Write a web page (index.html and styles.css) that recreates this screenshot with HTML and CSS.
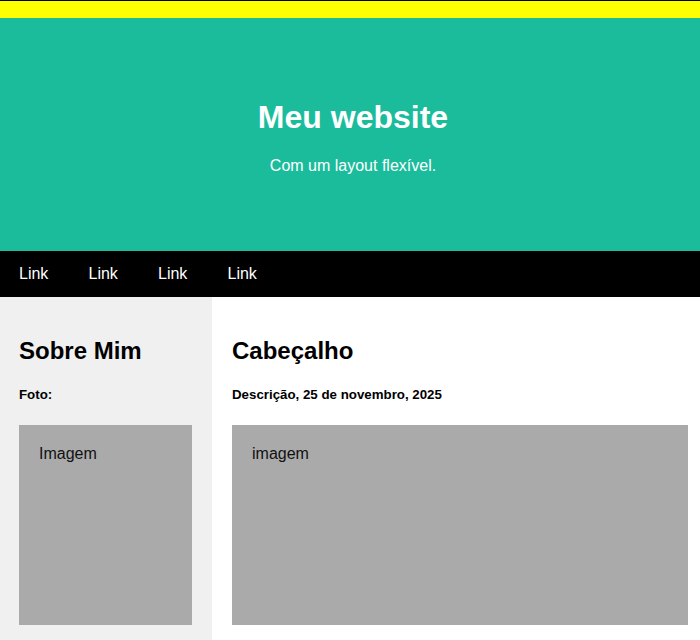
FILE: index.html
```html
<!DOCTYPE html>
<html lang="pt">
<head>
<meta charset="utf-8">
<title>Meu website</title>
<link rel="stylesheet" href="styles.css">
</head>
<body>
<div class="topbar"></div>
<header class="header">
  <h1>Meu website</h1>
  <p>Com um layout flexível.</p>
</header>
<nav class="navbar">
  <a href="#">Link</a>
  <a href="#">Link</a>
  <a href="#">Link</a>
  <a href="#">Link</a>
</nav>
<div class="row">
  <aside class="side">
    <h2>Sobre Mim</h2>
    <h5>Foto:</h5>
    <div class="fakeimg">Imagem</div>
  </aside>
  <main class="main">
    <h2>Cabeçalho</h2>
    <h5>Descrição, 25 de novembro, 2025</h5>
    <div class="fakeimg">imagem</div>
  </main>
</div>
</body>
</html>
```
FILE: styles.css
```css
* { box-sizing: border-box; }
html, body {
  margin: 0;
  padding: 0;
  font-family: "Liberation Sans", Arial, sans-serif;
  background: #ffffff;
}
.topbar {
  height: 18px;
  background: #ffff00;
  border-top: 1px solid #000;
}
.header {
  padding: 60px 54px 60px 60px;
  text-align: center;
  background: #1abc9c;
  color: #ffffff;
}
.header h1 {
  font-size: 32px;
  margin: 21px 0;
}
.header p {
  font-size: 16px;
  margin: 16px 0;
}
.navbar {
  display: flex;
  background: #000;
}
.navbar a {
  color: #ffffff;
  padding: 14px 20px 14px 19px;
  font-size: 16px;
  line-height: 18px;
  text-decoration: none;
  width: 69.5px;
}
.row {
  display: flex;
}
.side {
  width: 212px;
  flex: none;
  background: #f0f0f0;
  padding: 20px 20px 20px 19px;
}
.main {
  flex: 1;
  background: #ffffff;
  padding: 20px 12px 20px 20px;
}
h2 {
  font-size: 24px;
  margin: 20px 0;
  line-height: 28px;
}
h5 {
  font-size: 13.3px;
  margin: 22px 0 23px;
  line-height: 15px;
}
.fakeimg {
  background: #aaaaaa;
  width: 100%;
  height: 200px;
  padding: 20px;
  font-size: 16px;
  line-height: 18px;
  color: #111;
}
```
